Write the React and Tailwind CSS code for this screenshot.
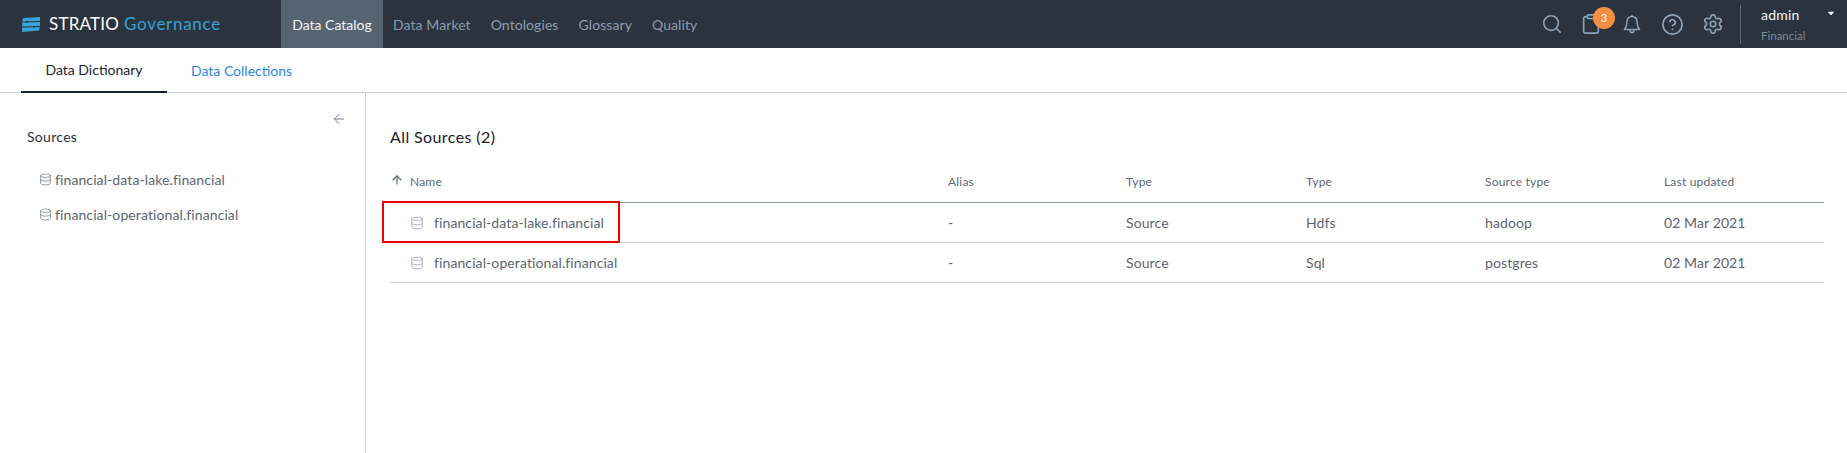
import React from "react";
import { Search, Clipboard, CircleHelp, Settings, ArrowLeft, ArrowUp, Database } from "lucide-react";
import { FaCaretDown } from "react-icons/fa";

const navItems = ["Data Market", "Ontologies", "Glossary", "Quality"];
const rows = [
  { name: "financial-data-lake.financial", kind: "Hdfs", source: "hadoop" },
  { name: "financial-operational.financial", kind: "Sql", source: "postgres" },
];

const Logo = () => (
  <svg width="20" height="15" viewBox="0 0 20 15" className="shrink-0">
    <path d="M2 1 L19 0 L19 4 L1 4.6 Z" fill="#38a3d6" />
    <path d="M1 5.6 L19 5 L19 9 L1 9.6 Z" fill="#38a3d6" />
    <path d="M1 10.6 L19 10 L18 13.6 L1 15 Z" fill="#38a3d6" />
    <circle cx="6" cy="5" r="0.9" fill="#2a333e" />
    <circle cx="13" cy="9.800" r="0.9" fill="#2a333e" />
  </svg>
);

const BellIcon = () => (
  <svg width="18" height="21" viewBox="0 0 18 21" fill="none" stroke="currentColor" strokeWidth="1.5" className="ml-[21px]">
    <path d="M9 2.5c-3.2 0-5 2.4-5 5.5 0 3.6-.8 5.6-2.6 7.6h15.2C14.8 13.6 14 11.600 14 8c0-3.100-1.800-5.500-5-5.500z" strokeLinejoin="round" />
    <path d="M7 16c0 1.500.8 2.600 2 2.600s2-1.100 2-2.600M9 1v1.500" />
  </svg>
);

const App = () => {
  return (
    <div className="flex flex-col w-full h-[453px] bg-white overflow-hidden font-['Lato','Noto_Sans',sans-serif]">
      {/* TOP BAR */}
      <div className="flex items-center h-12 bg-[#2a333e] shrink-0">
        <div className="flex items-center ml-[21px] w-[260px]">
          <Logo />
          <span className="ml-2 text-[17px] text-white tracking-[0.2px]">STRATIO</span>
          <span className="ml-[5px] text-[17px] text-[#38a3d6] tracking-[0.7px]">Governance</span>
        </div>
        <div className="flex items-center h-full">
          <div className="flex items-center h-full w-[102px] justify-center bg-[#566472] text-[14px] text-[#f1f4f7]">
            Data Catalog
          </div>
          <div className="flex items-center gap-5 ml-[10px] text-[14px] tracking-[0.08px] text-[#8d9cac]">
            {navItems.map((item) => (
              <span key={item}>{item}</span>
            ))}
          </div>
        </div>
        <div className="flex items-center ml-auto h-full text-[#8ea3b8]">
          <Search size={22} strokeWidth={1.8} />
          <div className="relative ml-[17px]">
            <Clipboard size={22} strokeWidth={1.8} />
            <span className="absolute -top-[6px] left-[13px] flex items-center justify-center w-[22px] h-[22px] rounded-full bg-[#f58d42] text-white text-[11px]">
              3
            </span>
          </div>
          <BellIcon />
          <CircleHelp size={23} strokeWidth={1.8} className="ml-[20px]" />
          <Settings size={22} strokeWidth={1.8} className="ml-[18px]" />
          <div className="w-px h-[39px] bg-[#5a6876] ml-[16px]" />
          <div className="w-[106px] pl-[20px]">
            <div className="flex items-center text-[14px] text-[#f1f4f7] leading-[18px] tracking-[0.2px]">
              admin
              <FaCaretDown size={10} className="ml-[26px] mb-[4px] text-white" />
            </div>
            <div className="mt-[5px] text-[11.500px] text-[#77899a] leading-[14px]">Financial</div>
          </div>
        </div>
      </div>

      {/* TABS */}
      <div className="flex h-[45px] border-b border-[#c9d3df] shrink-0 pl-[21px] text-[14px]">
        <div className="flex items-center justify-center w-[146px] h-[45px] border-b-[2px] border-[#17202b] text-[#1b2530]">
          Data Dictionary
        </div>
        <div className="flex items-center ml-[24px] text-[#2b87e8]">Data Collections</div>
      </div>

      <div className="flex flex-1 min-h-0">
        {/* LEFT */}
        <div className="w-[366px] shrink-0 border-r border-[#c9d3df] relative pl-[27px] pt-[34px]">
          <ArrowLeft size={16} strokeWidth={1.5} className="absolute top-[18px] right-[18px] text-[#6f7f90]" />
          <div className="text-[14px] text-[#2a3440] leading-[20px] tracking-[0.3px]">Sources</div>
          <div className="mt-[15px] pl-[12px] flex flex-col text-[14px] tracking-[0.1px] text-[#5c6570]">
            {rows.map((r) => (
              <div key={r.name} className="flex items-center h-[35px] gap-[3px]">
                <Database size={13} strokeWidth={1.5} className="text-[#7b8794]" />
                {r.name}
              </div>
            ))}
          </div>
        </div>

        {/* RIGHT */}
        <div className="flex-1 pl-6 pr-[23px] pt-[34px]">
          <h1 className="text-[16px] leading-[20px] text-[#17202b] tracking-[0.4px]">All Sources (2)</h1>
          <div className="relative mt-[19px]">
            <div className="grid grid-cols-[558px_178px_180px_179px_179px_1fr] items-center h-[37px] pb-[5px] border-b border-[#8a98a8] text-[12px] tracking-[0.2px] text-[#5c6873]">
              <div className="flex items-center">
                <ArrowUp size={14} strokeWidth={2} className="mb-[3px]" />
                <span className="ml-[6px]">Name</span>
              </div>
              <div>Alias</div>
              <div>Type</div>
              <div>Type</div>
              <div>Source type</div>
              <div>Last updated</div>
            </div>
            {rows.map((r) => (
              <div
                key={r.name}
                className="grid grid-cols-[558px_178px_180px_179px_179px_1fr] items-center h-[40px] border-b border-[#c9d3df] text-[14px] tracking-[0.1px] text-[#5c6570]"
              >
                <div className="flex items-center pl-[20px] gap-[10px]">
                  <Database size={14} strokeWidth={1.5} className="text-[#9fb1c4]" />
                  {r.name}
                </div>
                <div>-</div>
                <div>Source</div>
                <div>{r.kind}</div>
                <div>{r.source}</div>
                <div>02 Mar 2021</div>
              </div>
            ))}
            {/* red annotation box */}
            <div className="absolute top-[35px] -left-[8px] w-[238px] h-[42px] border-2 border-[#f00000]" />
          </div>
        </div>
      </div>
    </div>
  );
};

export default App;
